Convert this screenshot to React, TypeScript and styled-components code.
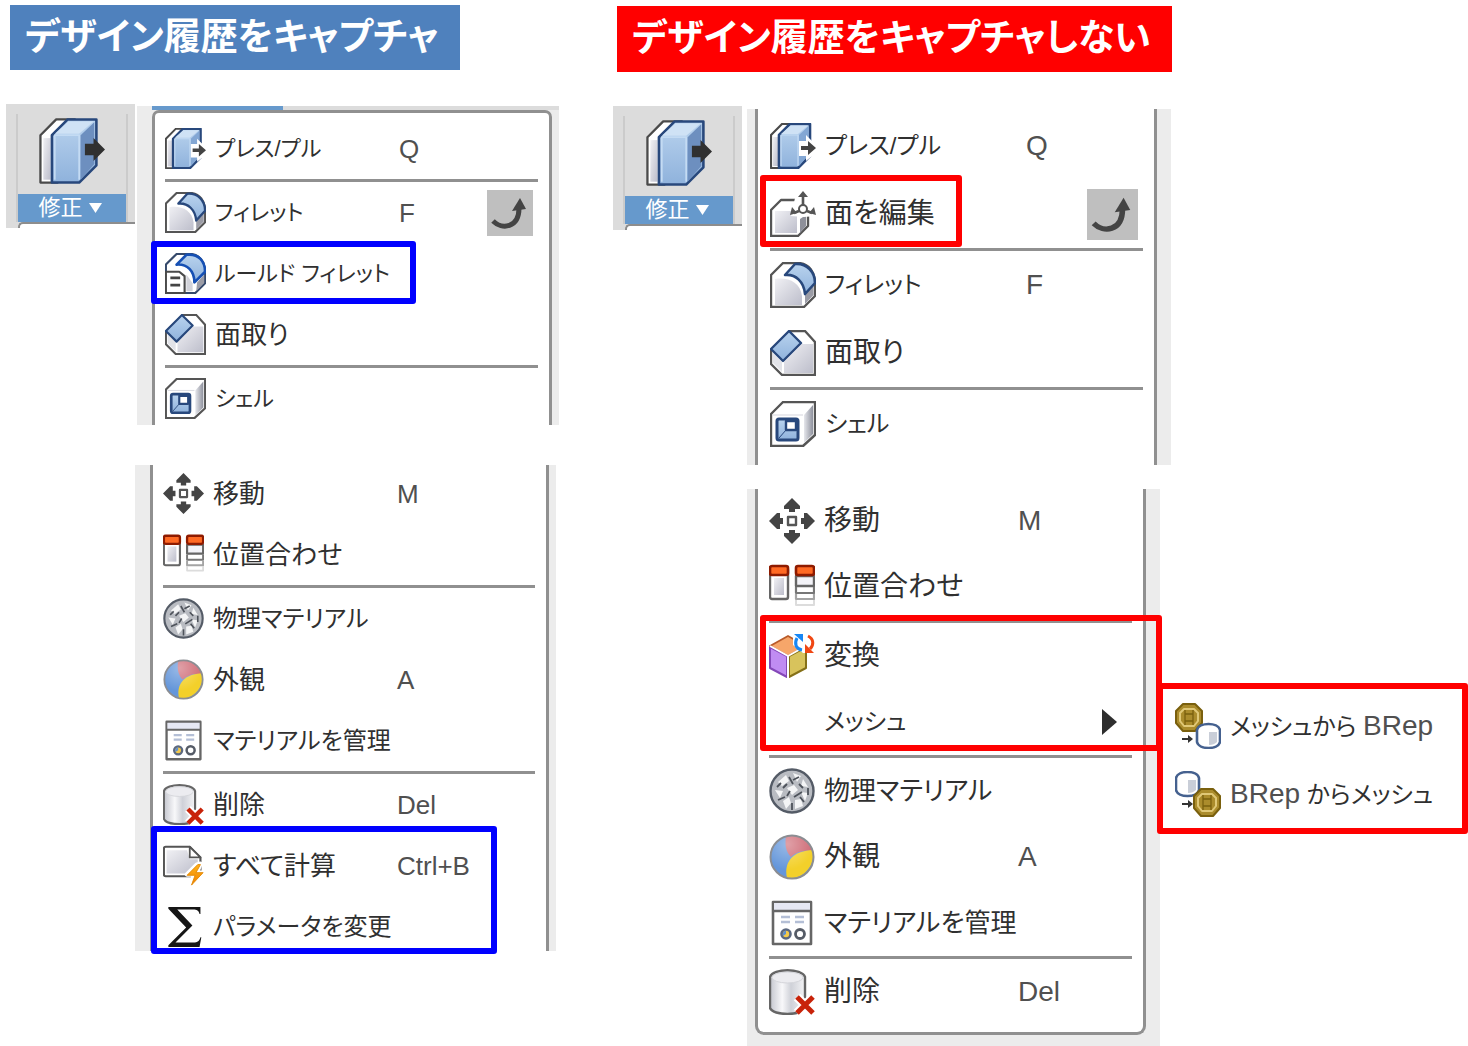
import React from "react";
import styled, { createGlobalStyle } from "styled-components";

const GlobalStyle = createGlobalStyle`
  * { box-sizing: border-box; }
  body {
    margin: 0;
    background: #ffffff;
    color: #303030;
    font-family: "Liberation Sans", "Noto Sans CJK JP", sans-serif;
    font-feature-settings: "palt";
    overflow-x: hidden;
  }
  button { font: inherit; color: inherit; font-feature-settings: inherit; }
`;

/* ---------- layout ---------- */

const Page = styled.main`
  display: grid;
  grid-template-columns: 607fr 861fr;
  align-items: start;
`;

const Column = styled.section<{ $top: number }>`
  display: flex;
  flex-direction: column;
  align-items: flex-start;
  padding-top: ${(p) => p.$top}px;
  padding-left: 6px;
`;

const Title = styled.h1<{ $color: string; $line: number }>`
  margin: 0 0 34px 4px;
  padding: 0 21px 0 15px;
  background: ${(p) => p.$color};
  color: #ffffff;
  font-size: 37px;
  font-weight: 700;
  line-height: ${(p) => p.$line}px;
  white-space: nowrap;
`;

const TopRow = styled.div<{ $gap: number }>`
  display: flex;
  align-items: flex-start;
  gap: ${(p) => p.$gap}px;
`;

/* ---------- toolbar tile ---------- */

const Tile = styled.div`
  width: 129px;
  padding: 10px 0 0 10px;
  background: #dcdcdc;
`;

const TileButton = styled.button`
  display: flex;
  flex-direction: column;
  align-items: center;
  width: 112px;
  padding: 4px 0 0;
  border: 0 solid #cbcbcb;
  border-width: 0 2px;
  background: none;
`;

const TileCaption = styled.span`
  display: flex;
  align-items: center;
  justify-content: center;
  gap: 6px;
  width: 108px;
  height: 28px;
  margin-top: 10px;
  padding-right: 4px;
  background: #6699cc;
  color: #ffffff;
  font-size: 22px;
  line-height: 28px;
`;

const TileFoot = styled.div`
  height: 6px;
  margin-left: 2px;
  border-top: 2px solid #8d8d8d;
  border-left: 2px solid #8d8d8d;
  border-top-left-radius: 5px;
  background: #ffffff;
`;

/* ---------- menu ---------- */

const Crop = styled.div<{ $w: number; $h: number; $left?: number; $top?: number; $inset: number }>`
  position: relative;
  display: flex;
  flex-direction: column;
  width: ${(p) => p.$w}px;
  height: ${(p) => p.$h}px;
  margin: ${(p) => p.$top ?? 0}px 0 0 ${(p) => p.$left ?? 0}px;
  padding-left: ${(p) => p.$inset}px;
  background: #ececec;
`;

const Strip = styled.div`
  height: 4px;
  background: linear-gradient(90deg, #6699cc 131px, #dcdcdc 131px);
`;

const Clip = styled.div`
  flex: 1;
  min-height: 0;
  overflow: hidden;
`;

const Panel = styled.ul<{ $w: number; $edge?: "top" | "bottom"; $lead: number; $pad: number }>`
  width: ${(p) => p.$w}px;
  min-height: ${(p) => (p.$edge === "bottom" ? "0" : "110%")};
  margin: ${(p) => (p.$lead < 0 ? p.$lead : 0)}px 0 0;
  padding: ${(p) => (p.$lead > 0 ? p.$lead : 0)}px 11px ${(p) => (p.$edge === "bottom" ? 7 : 0)}px ${(p) => p.$pad}px;
  list-style: none;
  background: #ffffff;
  border: 0 solid #909090;
  border-left-width: 3px;
  border-right-width: 3px;
  border-top-width: ${(p) => (p.$edge === "top" ? 3 : 0)}px;
  border-bottom-width: ${(p) => (p.$edge === "bottom" ? 3 : 0)}px;
  border-radius: ${(p) => (p.$edge === "top" ? "7px 7px 0 0" : p.$edge === "bottom" ? "0 0 9px 9px" : "0")};
`;

const Divider = styled.li`
  height: 3px;
  background: #909090;
`;

const Item = styled.button<{ $row: number; $icon: number; $label: number }>`
  display: grid;
  grid-template-columns: ${(p) => p.$icon}px ${(p) => p.$label}px 1fr auto;
  align-items: center;
  width: 100%;
  height: ${(p) => p.$row}px;
  padding: 0;
  border: 0;
  background: none;
  text-align: left;
  white-space: nowrap;
`;

const Label = styled.span<{ $size: number }>`
  padding-left: 9px;
  font-size: ${(p) => p.$size}px;
  line-height: 40px;
`;

const Latin = styled.span<{ $size: number }>`
  color: #505050;
  font-size: ${(p) => p.$size}px;
`;

const Shortcut = styled.kbd<{ $size: number }>`
  color: #505050;
  font-family: "Liberation Sans", sans-serif;
  font-size: ${(p) => p.$size}px;
  line-height: 40px;
`;

const Repeat = styled.span<{ $size: number }>`
  display: flex;
  width: ${(p) => p.$size}px;
  height: ${(p) => p.$size}px;
  margin-right: 5px;
  background: #bfbfbf;
`;

const More = styled.span`
  display: flex;
  margin-right: 14px;
`;

/* Annotation frames are laid over the menus they point at. */
const Frame = styled.div<{ $c: string; $x: number; $y: number; $w: number; $h: number }>`
  position: absolute;
  left: ${(p) => p.$x}px;
  top: ${(p) => p.$y}px;
  width: ${(p) => p.$w}px;
  height: ${(p) => p.$h}px;
  border: 6px solid ${(p) => p.$c};
  border-radius: 3px;
  pointer-events: none;
`;

const Flyout = styled.ul`
  position: absolute;
  left: 410px;
  top: 194px;
  width: 311px;
  margin: 0;
  padding: 3px 9px 0 12px;
  list-style: none;
  background: #ffffff;
  border: 6px solid #ff0000;
  border-radius: 3px;
`;

/* ---------- icons ---------- */

const Svg = ({ size, children }: { size: number; children: React.ReactNode }) => (
  <svg width={size} height={size} viewBox="0 0 46 46" fill="none" aria-hidden="true" strokeLinejoin="round">
    {children}
  </svg>
);

const Gradients = () => (
  <svg width="0" height="0" style={{ position: "absolute" }} aria-hidden="true">
    <defs>
      <linearGradient id="blue" x1="0" y1="0" x2="0" y2="1">
        <stop offset="0" stopColor="#b9d3ee" />
        <stop offset="1" stopColor="#8fb2dc" />
      </linearGradient>
      <linearGradient id="grey" x1="0" y1="0" x2="1" y2="1">
        <stop offset="0" stopColor="#f0f0f4" />
        <stop offset="1" stopColor="#bdbecb" />
      </linearGradient>
      <linearGradient id="metal" x1="0" y1="0" x2="1" y2="0">
        <stop offset="0" stopColor="#c4c6ce" />
        <stop offset="0.35" stopColor="#f8f8fa" />
        <stop offset="0.6" stopColor="#cfd1d8" />
        <stop offset="1" stopColor="#f4f4f6" />
      </linearGradient>
      <linearGradient id="side" x1="0" y1="0" x2="1" y2="0">
        <stop offset="0" stopColor="#e6e7ec" />
        <stop offset="1" stopColor="#8f929e" />
      </linearGradient>
      <radialGradient id="shine" cx="0.4" cy="0.2" r="0.6">
        <stop offset="0" stopColor="#ffffff" stopOpacity="0.35" />
        <stop offset="1" stopColor="#ffffff" stopOpacity="0" />
      </radialGradient>
      <linearGradient id="bolt" x1="0" y1="0" x2="0" y2="1">
        <stop offset="0" stopColor="#ffb21a" />
        <stop offset="1" stopColor="#ee7f00" />
      </linearGradient>
    </defs>
  </svg>
);

const PressPull = ({ size, solid }: { size: number; solid?: boolean }) => (
  <Svg size={size}>
    <path d="M1 12 12 1h13L13 12v33H1Z" fill="#fff" stroke="#4a4a4a" strokeWidth={solid ? 1.6 : 2.2} />
    <path d="M3 14h5v29H3Z" fill="url(#grey)" />
    <path d="M9 12 20 1h20v32L28 45H9Z" fill="url(#blue)" stroke="#28487c" strokeWidth={solid ? 1.8 : 2.6} />
    <path d="M11 11 20.500 2.500H38L28 11Z" fill="#cfe2f5" />
    <path d="M29 12 38.500 3v29L29 43Z" fill={solid ? "#6d8fbf" : "#83a7d4"} />
    <path d="M11 43V12h17v31" stroke="#c4dbf3" strokeWidth="1.200" />
    {!solid && <path d="M29 18h7v-6l10 10v8L36 38v-5h-7Z" fill="#fff" />}
    {solid ? (
      <path d="M32 18h6v-4l8 8-8 8v-4h-6Z" fill="#303030" />
    ) : (
      <path d="M31 23h7v-5l8 7-8 7v-5h-7Z" fill="#444" />
    )}
  </Svg>
);

const Fillet = ({ size }: { size: number }) => (
  <Svg size={size}>
    <path d="M1 13 13 1h16c10 1 16 9 16 20v13L34 45H1Z" fill="#fff" stroke="#555" strokeWidth="2.400" />
    <path d="M5 17c13-2 25 3 27 17v9H5Z" fill="url(#grey)" />
    <path d="M35 32 43.500 23v10L35 42Z" fill="#9b9ca6" />
    <path d="M15 13 25 2c12-1 20 8 20 19L35 32C34 20 26 12 15 13Z" fill="url(#blue)" stroke="#28487c" strokeWidth="2.600" />
  </Svg>
);

const RuleFillet = ({ size }: { size: number }) => (
  <Svg size={size}>
    <path d="M1 13 13 1h16c10 1 16 9 16 20v13L34 45H1Z" fill="#fff" stroke="#35496b" strokeWidth="2.400" />
    <path d="M36 33 44 24v9L35 43Z" fill="#9b9ca6" />
    <path d="M13 13 24 2c14-2 21 8 21 19L33 33C33 20 25 12 13 13Z" fill="url(#blue)" stroke="#1650b4" strokeWidth="3" />
    <path d="M24 24v19h7v-9Z" fill="#d2d3da" />
    <path d="M1 21h15l6 5v19H1Z" fill="#fff" stroke="#4a4a4a" strokeWidth="2.400" />
    <path d="M6 28h11M6 36h11" stroke="#444" strokeWidth="3" />
  </Svg>
);

const Chamfer = ({ size }: { size: number }) => (
  <Svg size={size}>
    <path d="M1 20 20 1h15l10 11v33H12L1 34Z" fill="#fff" stroke="#555" strokeWidth="2.400" />
    <path d="M14 32 32 14h11v29H14Z" fill="url(#grey)" />
    <path d="M3 23v10l9 9V32Z" fill="#e2e3e8" />
    <path d="M1 19 19 1l12 12-18 18Z" fill="url(#blue)" stroke="#28487c" strokeWidth="2.400" />
  </Svg>
);

const Shell = ({ size }: { size: number }) => (
  <Svg size={size}>
    <path d="M1 13 13 1h32v33L33 45H1Z" fill="#fff" stroke="#555" strokeWidth="2.400" />
    <path d="M34 14 43 4v29l-9 9Z" fill="url(#side)" />
    <path d="M3 14h30" stroke="#dcdde3" strokeWidth="1.200" />
    <rect x="7" y="18" width="21" height="21" rx="2" fill="url(#blue)" stroke="#28487c" strokeWidth="3" />
    <path d="M16 20h10v9H16Z" fill="#fff" stroke="#28487c" strokeWidth="2.400" />
    <path d="m9 37 7-8" stroke="#28487c" strokeWidth="1" />
  </Svg>
);

const EditFace = ({ size }: { size: number }) => (
  <Svg size={size}>
    <path d="M1 19 11 9h27v26L28 45H1Z" fill="#fff" stroke="#555" strokeWidth="2.400" />
    <path d="M5 20h22v22H5Z" fill="url(#grey)" />
    <path d="M30 28l6-4v11l-6 7Z" fill="#8e909a" />
    <path d="M25 7h16v8l5 10-12 1-13-1Z" fill="#fff" />
    <path d="M33 4v10M29 20l-5 2M37 20l5 2" stroke="#555" strokeWidth="2.600" />
    <path d="M33 0l5 6H28ZM20 24l2-8 5 6ZM46 24l-2-8-5 6Z" fill="#555" />
    <circle cx="33" cy="18" r="4" fill="#fff" stroke="#555" strokeWidth="2" />
  </Svg>
);

const Move = ({ size }: { size: number }) => (
  <Svg size={size}>
    <rect x="19" y="19" width="8" height="8" stroke="#555" strokeWidth="2.400" />
    <g fill="#444">
      {[0, 90, 180, 270].map((a) => (
        <path key={a} transform={`rotate(${a} 23 23)`} d="M23 0l8 8v3h-5v3h-6v-3h-5V8Z" />
      ))}
    </g>
  </Svg>
);

const Align = ({ size }: { size: number }) => (
  <Svg size={size}>
    <rect x="1" y="4" width="18" height="31" rx="2" fill="#fff" stroke="#666" strokeWidth="2.400" />
    <path d="M5 14h10v17H5Z" fill="url(#grey)" />
    <rect x="27" y="12" width="18" height="10" fill="#f3f3f8" stroke="#666" strokeWidth="2.400" />
    <path d="M27 23v6h18v-6" stroke="#777" strokeWidth="2.200" />
    <path d="M27 30v5h18v-5" stroke="#a4a4a4" strokeWidth="2.200" />
    <path d="M27 36v5h18v-5" stroke="#dcdcdc" strokeWidth="2" />
    <rect x="1" y="2" width="18" height="9" rx="2" fill="#ff6a24" stroke="#8e1b00" strokeWidth="2.600" />
    <rect x="27" y="2" width="18" height="9" rx="2" fill="#ff6a24" stroke="#8e1b00" strokeWidth="2.600" />
  </Svg>
);

const Physical = ({ size }: { size: number }) => (
  <Svg size={size}>
    <circle cx="23" cy="23" r="21.500" fill="#b9bcc2" stroke="#545b66" strokeWidth="2.400" />
    <path d="M9 14l8-7 3 6-7 5ZM24 5l8 3-4 6ZM34 11l5 8-7-1ZM6 22l8 1-3 7ZM18 20l7-3 4 5-6 5ZM32 24l7 1-3 8ZM14 33l6-4 2 6-5 6ZM26 32l6-1 2 7-8 3Z" fill="#f4f5f6" />
    <path d="M14 20l4-4M20 9l4 7M30 16l4 4M9 32l7-3M18 28l3-5M25 29l8-5M23 35v7M35 34l-4-5M39 20v7M24 12l6-3M8 19l4-4" stroke="#4d525a" strokeWidth="1.800" />
  </Svg>
);

const Appearance = ({ size }: { size: number }) => (
  <Svg size={size}>
    <circle cx="23" cy="23" r="21.500" fill="#6496da" />
    <path d="M17 2C27-1 40 6 44 17c-10-1-17 1-22 6C16 17 16 9 17 2Z" fill="#cf6d78" />
    <path d="M44 16c3 14-9 30-26 28-3-12 2-27 26-28Z" fill="#f3d02a" />
    <circle cx="23" cy="23" r="21.500" fill="url(#shine)" stroke="#8b8d92" strokeWidth="2" />
  </Svg>
);

const Manage = ({ size }: { size: number }) => (
  <Svg size={size}>
    <rect x="4" y="2" width="38" height="42" fill="#fff" stroke="#666" strokeWidth="2.600" />
    <path d="M5 3h36v7H5Z" fill="#e6e8f4" />
    <path d="M4 11h38" stroke="#666" strokeWidth="2.400" />
    <path d="M12 17h9M12 22h9M26 17h9M26 22h9" stroke="#b4bfd6" strokeWidth="2.400" />
    <circle cx="17" cy="34" r="4.500" fill="#f4c94a" stroke="#5b6880" strokeWidth="2.600" />
    <path d="M17 30.500v3.500l-3 2a4 4 0 0 1 3-5.500Z" fill="#5f8fd0" />
    <circle cx="31" cy="34" r="4.500" fill="#fff" stroke="#555b66" strokeWidth="2.800" />
  </Svg>
);

const Delete = ({ size }: { size: number }) => (
  <Svg size={size}>
    <path d="M1 8c3-9 32-9 35 0v31c-3 8-32 8-35 0Z" fill="url(#metal)" stroke="#666" strokeWidth="2.400" />
    <ellipse cx="18.500" cy="8.500" rx="15.500" ry="5.500" fill="#ececf0" stroke="#d4d5da" strokeWidth="1" />
    <path d="m28 28 16 16M44 28 28 44" stroke="#fff" strokeWidth="9" />
    <path d="m28 28 16 16M44 28 28 44" stroke="#c8230a" strokeWidth="5" />
  </Svg>
);

const Compute = ({ size }: { size: number }) => (
  <Svg size={size}>
    <path d="M1 4q0-2 2-2h27l12 12v21H3q-2 0-2-2Z" fill="#fff" stroke="#555" strokeWidth="2.400" />
    <path d="M4 6h23l3 10h9v16H4Z" fill="url(#grey)" />
    <path d="M30 2v12h12Z" fill="#fff" stroke="#555" strokeWidth="2" />
    <path d="M38 22 27 33h8l-4 12 14-14h-7l4-10Z" fill="#fff" stroke="#fff" strokeWidth="5" />
    <path d="M39 22 27 34h9l-4 11 13-14h-8l5-9Z" fill="url(#bolt)" stroke="#e38700" strokeWidth="1" />
  </Svg>
);

const Sigma = ({ size }: { size: number }) => (
  <Svg size={size}>
    <path d="M6 1h36v8h-1c-1-4-3-5-7-5H16l17 18-19 19h20c5 0 7-2 8-6h1l-2 11H6v-2l20-20L6 3Z" fill="#161616" />
  </Svg>
);

const Convert = ({ size }: { size: number }) => (
  <Svg size={size}>
    <path d="M1 13 19 3l18 10-18 10Z" fill="#f6a66a" stroke="#b95b2a" strokeWidth="1.800" />
    <path d="M1 14 18 23v21L1 35Z" fill="#c08cf2" stroke="#8448b8" strokeWidth="2" />
    <path d="M37 14 20 23v21l17-9Z" fill="#d8c35c" stroke="#857018" strokeWidth="2" />
    <path d="M19 23v22M1 13l18 10 18-10" stroke="#fff" strokeWidth="2" />
    <path d="M24 0h22v20H34L24 12Z" fill="#fff" />
    <path d="M33 17c-6-1-8-6-5-12" stroke="#1787f5" strokeWidth="3" />
    <path d="M25 1h9v8Z" fill="#1787f5" />
    <path d="M39 3c6 3 6 9 2 13" stroke="#f04713" strokeWidth="3" />
    <path d="M36 11v9h9Z" fill="#f04713" />
  </Svg>
);

const MeshShape = ({ x, y }: { x: number; y: number }) => (
  <g transform={`translate(${x} ${y})`}>
    <path d="M8 1h12l7 7v12l-7 8H8l-7-8V8Z" fill="#ab8c2c" stroke="#7a600e" strokeWidth="2" />
    <path d="M9 6h10l4 4v8l-4 5H9l-4-5v-8Z" stroke="#e0c877" strokeWidth="2" />
    <path d="M10 7v15M18 7v15M10 11h8M10 18h8" stroke="#7a600e" strokeWidth="1.300" />
  </g>
);

const BodyShape = ({ x, y }: { x: number; y: number }) => (
  <g transform={`translate(${x} ${y})`}>
    <path d="M1 7C3-1 22-1 24 7v12c-2 8-21 8-23 0Z" fill="#fff" stroke="#45618f" strokeWidth="2.600" />
    <path d="M13 9h8v10q-3 3-8 3Z" fill="#c9ced8" />
  </g>
);

const MeshToBody = ({ size }: { size: number }) => (
  <Svg size={size}>
    <MeshShape x={0} y={0} />
    <BodyShape x={21} y={20} />
    <path d="M7 35h6v-3l5 4-5 4v-3H7Z" fill="#333" />
  </Svg>
);

const BodyToMesh = ({ size }: { size: number }) => (
  <Svg size={size}>
    <path d="M7 32h6v-3l5 4-5 4v-3H7Z" fill="#333" />
    <BodyShape x={0} y={0} />
    <MeshShape x={18} y={17} />
  </Svg>
);

const RepeatArrow = ({ size }: { size: number }) => (
  <Svg size={size}>
    <path d="M6 31c9 9 26 7 26-13" stroke="#444" strokeWidth="5" />
    <path d="M33 8 25 21l14-2Z" fill="#444" />
  </Svg>
);

/* ---------- menu data ---------- */

type Entry = {
  icon?: (p: { size: number }) => React.ReactElement;
  text: React.ReactNode;
  step: 0 | 1 | 2;
  keys?: string;
  repeat?: boolean;
  more?: boolean;
};

type Scale = { row: number; icon: number; label: number; base: number };

const left: Scale = { row: 61, icon: 41, label: 193, base: 22 };
const rightTop: Scale = { row: 68, icon: 46, label: 210, base: 24 };
const rightBottom: Scale = { row: 66, icon: 46, label: 203, base: 24 };

const pressPull: Entry = { icon: PressPull, text: "プレス/プル", step: 0, keys: "Q" };
const fillet: Entry = { icon: Fillet, text: "フィレット", step: 0, keys: "F" };
const chamfer: Entry = { icon: Chamfer, text: "面取り", step: 2 };
const shell: Entry = { icon: Shell, text: "シェル", step: 0 };
const move: Entry = { icon: Move, text: "移動", step: 2, keys: "M" };
const align: Entry = { icon: Align, text: "位置合わせ", step: 2 };
const physical: Entry = { icon: Physical, text: "物理マテリアル", step: 1 };
const appearance: Entry = { icon: Appearance, text: "外観", step: 2, keys: "A" };
const manage: Entry = { icon: Manage, text: "マテリアルを管理", step: 1 };
const remove: Entry = { icon: Delete, text: "削除", step: 2, keys: "Del" };

const MenuItem = ({ entry, scale }: { entry: Entry; scale: Scale }) => {
  const Icon = entry.icon;
  return (
    <li>
      <Item type="button" $row={scale.row} $icon={scale.icon} $label={scale.label}>
        {Icon ? <Icon size={scale.icon} /> : <span />}
        <Label $size={scale.base + entry.step * 2}>{entry.text}</Label>
        {entry.keys ? <Shortcut $size={scale.base + 4}>{entry.keys}</Shortcut> : <span />}
        {entry.repeat && (
          <Repeat $size={scale.icon + 5}>
            <RepeatArrow size={scale.icon + 5} />
          </Repeat>
        )}
        {entry.more && (
          <More>
            <svg width="17" height="28" viewBox="0 0 17 28" aria-hidden="true">
              <path d="M1 1 16 14 1 27Z" fill="#2e2e2e" />
            </svg>
          </More>
        )}
      </Item>
    </li>
  );
};

const Entries = ({ list, scale }: { list: (Entry | null)[]; scale: Scale }) => (
  <>
    {list.map((e, i) => (e ? <MenuItem key={i} entry={e} scale={scale} /> : <Divider key={i} role="separator" />))}
  </>
);

const ModifyTile = () => (
  <Tile>
    <TileButton type="button">
      <PressPull size={66} solid />
      <TileCaption>
        修正
        <svg width="13" height="10" viewBox="0 0 13 10" aria-hidden="true">
          <path d="M0 0h13L6.500 10Z" fill="#fff" />
        </svg>
      </TileCaption>
    </TileButton>
    <TileFoot />
  </Tile>
);

export default function App() {
  return (
    <Page>
      <GlobalStyle />
      <Gradients />
      <Column $top={5}>
        <Title $color="#4f81bd" $line={65}>デザイン履歴をキャプチャ</Title>
        <TopRow $gap={2}>
          <ModifyTile />
          <Crop $w={422} $h={319} $top={2} $inset={15}>
            <Strip />
            <Clip>
              <Panel $w={400} $edge="top" $lead={5} $pad={10}>
                <Entries
                  scale={left}
                  list={[
                    pressPull,
                    null,
                    { ...fillet, repeat: true },
                    { icon: RuleFillet, text: "ルールド フィレット", step: 0 },
                    chamfer,
                    null,
                    shell,
                  ]}
                />
              </Panel>
            </Clip>
            <Frame $c="#0000ff" $x={14} $y={135} $w={265} $h={63} />
          </Crop>
        </TopRow>
        <Crop $w={421} $h={486} $left={129} $top={40} $inset={15}>
          <Clip>
            <Panel $w={399} $lead={-2} $pad={10}>
              <Entries
                scale={left}
                list={[
                  move,
                  align,
                  null,
                  physical,
                  appearance,
                  manage,
                  null,
                  remove,
                  { icon: Compute, text: "すべて計算", step: 2, keys: "Ctrl+B" },
                  { icon: Sigma, text: "パラメータを変更", step: 1 },
                ]}
              />
            </Panel>
          </Clip>
          <Frame $c="#0000ff" $x={16} $y={361} $w={346} $h={128} />
        </Crop>
      </Column>

      <Column $top={6}>
        <Title $color="#ff0000" $line={66}>デザイン履歴をキャプチャしない</Title>
        <TopRow $gap={5}>
          <ModifyTile />
          <Crop $w={424} $h={356} $top={3} $inset={8}>
            <Clip>
              <Panel $w={402} $lead={3} $pad={12}>
                <Entries
                  scale={rightTop}
                  list={[
                    pressPull,
                    { icon: EditFace, text: "面を編集", step: 2, repeat: true },
                    null,
                    fillet,
                    chamfer,
                    null,
                    shell,
                  ]}
                />
              </Panel>
            </Clip>
            <Frame $c="#ff0000" $x={13} $y={66} $w={202} $h={72} />
          </Crop>
        </TopRow>
        <Crop $w={413} $h={557} $left={134} $top={24} $inset={8}>
          <Clip>
            <Panel $w={391} $edge="bottom" $lead={-1} $pad={11}>
              <Entries
                scale={rightBottom}
                list={[
                  move,
                  align,
                  null,
                  { icon: Convert, text: "変換", step: 2 },
                  { text: "メッシュ", step: 0, more: true },
                  null,
                  physical,
                  appearance,
                  manage,
                  null,
                  remove,
                ]}
              />
            </Panel>
          </Clip>
          <Frame $c="#ff0000" $x={13} $y={126} $w={402} $h={136} />
          <Flyout>
            <Entries
              scale={rightTop}
              list={[
                { icon: MeshToBody, text: <>メッシュから <Latin $size={28}>BRep</Latin></>, step: 0 },
                { icon: BodyToMesh, text: <><Latin $size={28}>BRep</Latin> からメッシュ</>, step: 0 },
              ]}
            />
          </Flyout>
        </Crop>
      </Column>
    </Page>
  );
}
